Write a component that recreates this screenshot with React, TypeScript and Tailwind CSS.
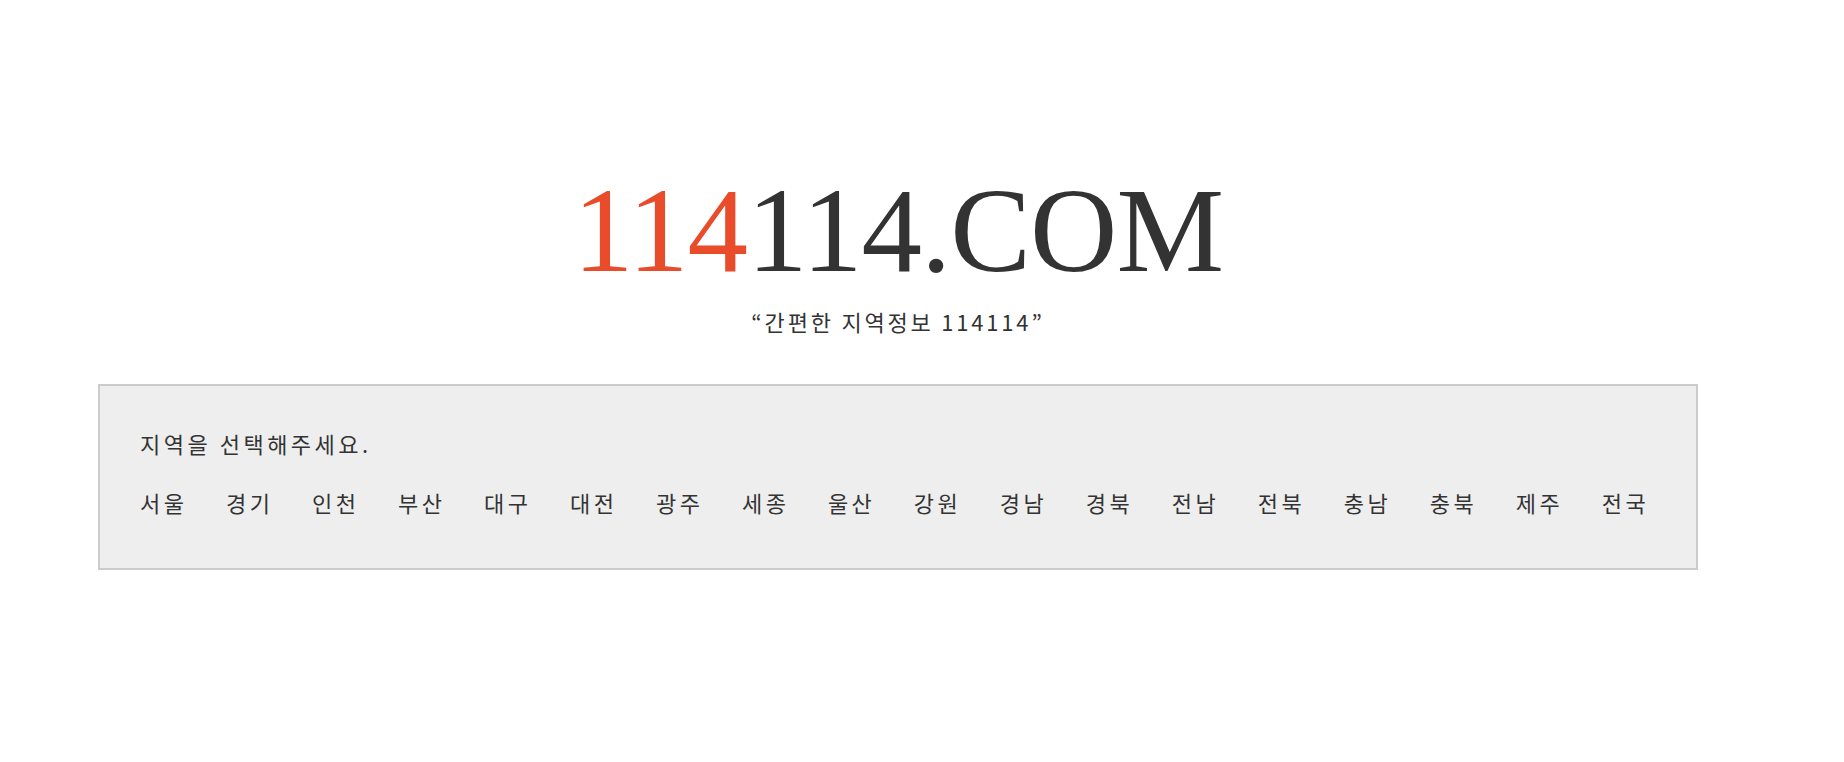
import React from "react";

const regions = ["서울","경기","인천","부산","대구","대전","광주","세종","울산","강원","경남","경북","전남","전북","충남","충북","제주","전국"];

export default function App() {
  return (
    <div className="w-[1796px] h-[762px] bg-white flex flex-col items-center font-['Noto_Sans_CJK_KR',sans-serif]">
      <h1 className="mt-[170px] text-[121px] leading-[120px] tracking-[-1px] text-[#333333] font-normal font-['Liberation_Serif','Times_New_Roman',serif]">
        <span className="text-[#e84c2b]">114</span>114.COM
      </h1>
      <p className="mt-[16px] text-[22px] leading-[30px] tracking-[2.8px] text-[#333333]">
        “간편한 지역정보 114114”
      </p>
      <div className="mt-[48px] w-[1600px] border-2 border-[#cccccc] bg-[#eeeeee] pl-[40px] pt-[42px] pb-[51px]">
        <p className="text-[22px] leading-[30px] tracking-[3.5px] text-[#333333]">지역을 선택해주세요.</p>
        <ul className="mt-[29px] flex gap-[38.5px] text-[22px] leading-[30px] tracking-[3.5px] text-[#333333]">
          {regions.map((r) => (
            <li key={r}>{r}</li>
          ))}
        </ul>
      </div>
    </div>
  );
}
